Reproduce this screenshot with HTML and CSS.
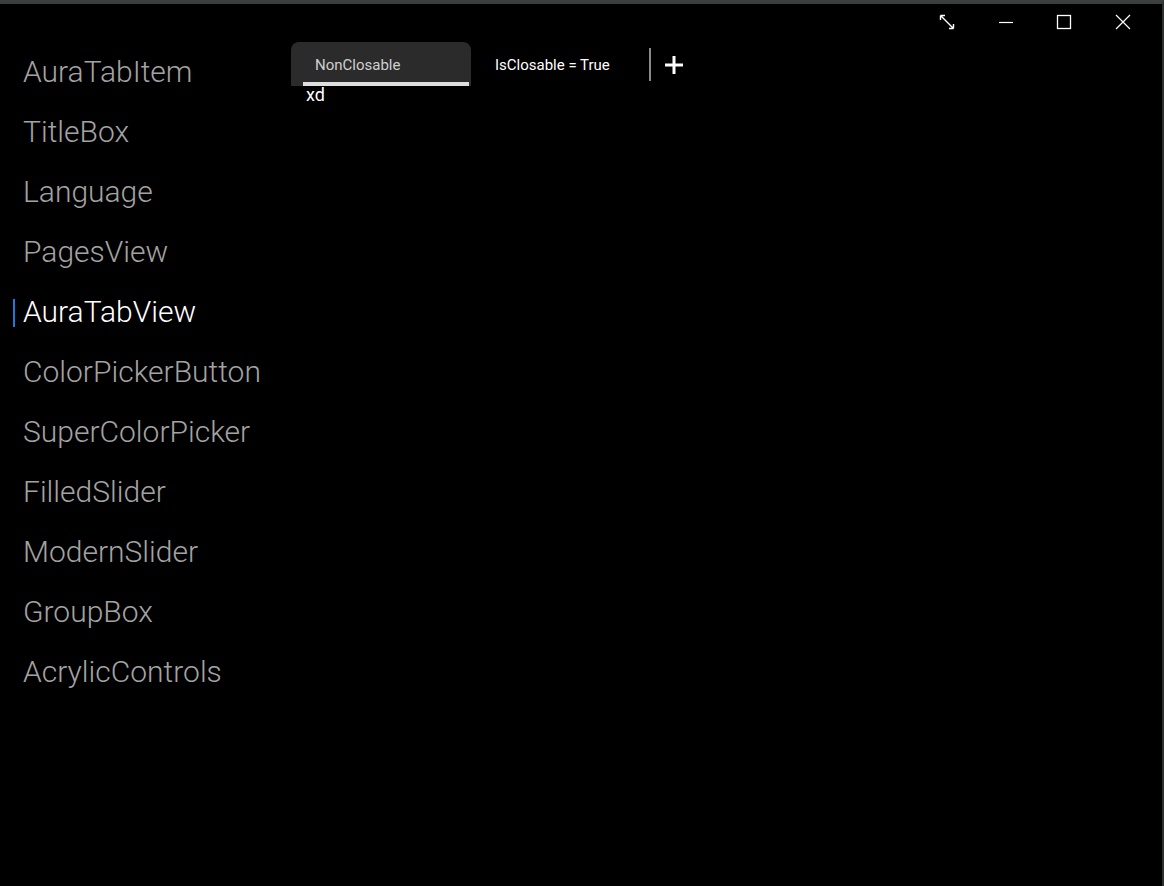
FILE: index.html
```html
<!DOCTYPE html>
<html>
<head>
<meta charset="utf-8">
<link rel="stylesheet" href="styles.css">
</head>
<body>
<div class="window">
  <div class="titlebar">
    <div class="caption-btn">
      <svg width="16" height="16" viewBox="0 0 16 16"><path d="M1.5 1.5 L14.5 14.5 M1.5 1.5 H6 M1.5 1.5 V6 M14.5 14.5 H10 M14.5 14.5 V10" stroke="#fff" stroke-width="1.4" fill="none"/></svg>
    </div>
    <div class="caption-btn">
      <svg width="16" height="16" viewBox="0 0 16 16"><path d="M1 8.5 H15" stroke="#fff" stroke-width="1.2" fill="none"/></svg>
    </div>
    <div class="caption-btn">
      <svg width="16" height="16" viewBox="0 0 16 16"><rect x="1.5" y="1.5" width="13" height="13" stroke="#fff" stroke-width="1.3" fill="none"/></svg>
    </div>
    <div class="caption-btn">
      <svg width="16" height="16" viewBox="0 0 16 16"><path d="M1 1 L15 15 M15 1 L1 15" stroke="#fff" stroke-width="1.2" fill="none"/></svg>
    </div>
  </div>
  <div class="main">
    <nav class="nav">
      <div class="nav-item">AuraTabItem</div>
      <div class="nav-item">TitleBox</div>
      <div class="nav-item">Language</div>
      <div class="nav-item">PagesView</div>
      <div class="nav-item active">AuraTabView</div>
      <div class="nav-item">ColorPickerButton</div>
      <div class="nav-item">SuperColorPicker</div>
      <div class="nav-item">FilledSlider</div>
      <div class="nav-item">ModernSlider</div>
      <div class="nav-item">GroupBox</div>
      <div class="nav-item">AcrylicControls</div>
    </nav>
    <section class="content">
      <div class="tabstrip">
        <div class="tab selected">
          <span class="tab-label">NonClosable</span>
          <div class="tab-underline"></div>
        </div>
        <div class="tab">
          <span class="tab-label">IsClosable = True</span>
        </div>
        <div class="tab-sep"></div>
        <div class="add-btn">
          <svg width="20" height="20" viewBox="0 0 20 20"><path d="M10 1 V19 M1 10 H19" stroke="#fff" stroke-width="3" fill="none"/></svg>
        </div>
      </div>
      <div class="tab-content">xd</div>
    </section>
  </div>
</div>
</body>
</html>
```

FILE: styles.css
```css
html, body {
  margin: 0;
  padding: 0;
  background: #000;
  width: 1164px;
  height: 886px;
  overflow: hidden;
}
.window {
  box-sizing: border-box;
  width: 1164px;
  height: 886px;
  background: #000;
  border-top: 4px solid #3b403e;
  border-right: 2px solid #2c302f;
  font-family: Roboto, "Liberation Sans", sans-serif;
  color: #fff;
  display: flex;
  flex-direction: column;
}
.titlebar {
  display: flex;
  justify-content: flex-end;
  height: 36px;
  padding-right: 10px;
}
.caption-btn {
  width: 58.5px;
  height: 36px;
  display: flex;
  align-items: center;
  justify-content: center;
  box-sizing: border-box;
}
.main {
  display: flex;
  flex: 1;
}
.nav {
  width: 291px;
  display: flex;
  flex-direction: column;
  padding-top: 12px;
}
.nav-item {
  height: 60px;
  line-height: 40px;
  padding-left: 23px;
  font-size: 30px;
  font-weight: 300;
  color: #a3a3a3;
  position: relative;
  box-sizing: border-box;
}
.nav-item.active {
  color: #fff;
}
.nav-item.active::before {
  content: "";
  position: absolute;
  left: 13px;
  top: 7px;
  width: 2px;
  height: 28px;
  background: #1e7ad8;
}
.content {
  flex: 1;
  padding-top: 2px;
}
.tabstrip {
  display: flex;
  align-items: stretch;
  height: 44px;
}
.tab {
  width: 180px;
  position: relative;
  display: flex;
  align-items: center;
  padding-top: 2px;
  box-sizing: border-box;
}
.tab.selected {
  background: #2b2b2b;
  border-radius: 8px 8px 0 0;
}
.tab-label {
  font-size: 15px;
  color: #fff;
  padding-left: 24px;
}
.tab.selected .tab-label {
  color: #cfcfcf;
}
.tab-underline {
  position: absolute;
  left: 12px;
  right: 2px;
  bottom: 0;
  height: 4px;
  background: #dedede;
}
.tab-sep {
  width: 2px;
  background: #8a8a8a;
  margin: 6px 0 5px -2px;
}
.add-btn {
  width: 48px;
  display: flex;
  align-items: center;
  justify-content: center;
  padding-top: 2px;
  margin-left: -1px;
  box-sizing: border-box;
}
.tab-content {
  font-size: 18px;
  font-weight: 400;
  padding-left: 15px;
  line-height: 20px;
  margin-top: -1px;
}
```
